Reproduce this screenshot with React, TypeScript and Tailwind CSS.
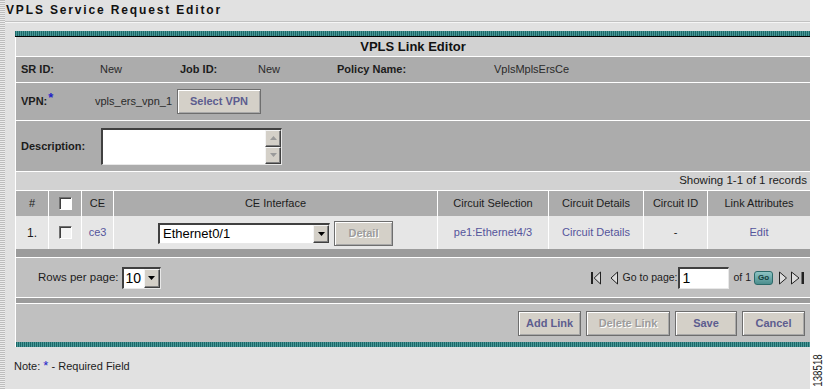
import React from 'react';

const link = 'text-[#55559c]';

const Checkbox: React.FC<{ light?: boolean }> = ({ light }) => (
    <span
        className={`block w-[13px] h-[13px] border-t border-l border-t-[#707070] border-l-[#707070] border-r border-b border-r-[#ffffff] border-b-[#ffffff] shadow-[inset_1px_1px_0_#404040] ${light ? 'bg-[#f4f4f4]' : 'bg-white'}`}
    />
);

const ArrowBtn: React.FC<{ dir: 'up' | 'down'; color?: string; h: string }> = ({ dir, color = '#000', h }) => (
    <span className={`flex items-center justify-center w-[16px] ${h} bg-[#d4d0c8] border border-t-[#f4f4f4] border-l-[#f4f4f4] border-r-[#404040] border-b-[#404040] shadow-[inset_-1px_-1px_0_#808080]`}>
        <svg width="7" height="4" viewBox="0 0 7 4">
            {dir === 'down' ? <path d="M0 0h7L3.5 4z" fill={color} /> : <path d="M0 4h7L3.5 0z" fill={color} />}
        </svg>
    </span>
);

const Btn: React.FC<{ children: React.ReactNode; w: string; disabled?: boolean }> = ({ children, w, disabled }) => (
    <button
        className={`h-[25px] ${w} flex items-center justify-center bg-[#d4d0c8] border border-[#6e6e6e] shadow-[inset_1px_1px_0_#ffffff,inset_-1px_-1px_0_#a8a8a8] text-[11px] font-bold ${disabled ? 'text-[#9c9c9c] [text-shadow:1px_1px_0_#ffffff]' : 'text-[#5d5d8f]'}`}
    >
        {children}
    </button>
);

// pager arrows: first / prev / next / last
const First = () => (
    <svg width="10" height="14" viewBox="0 0 10 14">
        <rect x="0" y="1" width="2" height="12" fill="#222" />
        <path d="M9.5 1v12L3.2 7z" fill="#dcdcdc" stroke="#222" strokeWidth="1" />
    </svg>
);
const Prev = () => (
    <svg width="8" height="14" viewBox="0 0 8 14">
        <path d="M7.5 1v12L1 7z" fill="#dcdcdc" stroke="#222" strokeWidth="1" />
    </svg>
);
const Next = () => (
    <svg width="9" height="14" viewBox="0 0 9 14">
        <path d="M0.5 1v12L7.5 7z" fill="#dcdcdc" stroke="#222" strokeWidth="1" />
    </svg>
);
const Last = () => (
    <svg width="14" height="14" viewBox="0 0 14 14">
        <path d="M0.5 1v12L8 7z" fill="#dcdcdc" stroke="#222" strokeWidth="1" />
        <rect x="10.5" y="1" width="2.5" height="12" fill="#222" />
    </svg>
);

export default function App() {
    return (
        <div className="w-[824px] h-[389px] flex bg-white font-['Liberation_Sans',Arial,sans-serif] text-[#1c1c1c] overflow-hidden">
            <div className="w-[810px] h-full flex bg-[#e1e1e1]">
                {/* dotted left edge */}
                <div className="w-[5px] h-full bg-[repeating-linear-gradient(0deg,#bdbdbd_0px,#bdbdbd_1px,#ececec_1px,#ececec_2px)]" />
                <div className="flex-1 flex flex-col">
                    <div className="h-[21px] flex items-center pl-[1px] pb-[1px] text-[12px] font-bold tracking-[1.85px] text-[#111]">
                        VPLS Service Request Editor
                    </div>
                    <div className="h-[2px] border-t border-t-[#c2c2c2] border-b border-b-[#f6f6f6]" />

                    {/* panel */}
                    <div className="mt-[8px] ml-[10px] w-[795px] flex flex-col">
                        <div className="h-[5px] bg-[repeating-linear-gradient(90deg,#1c6868_0px,#1c6868_1px,#4a9898_1px,#4a9898_2px)]" />
                        <div className="h-[1px] bg-black" />
                        <div className="flex flex-col border-l border-white">
                            <div className="h-[20px] flex items-center justify-center bg-[#d2d2d2] border-b border-white text-[13px] font-bold text-[#111]">
                                VPLS Link Editor
                            </div>

                            <div className="h-[26px] flex items-center pl-[5px] bg-[#acacac] border-b border-white text-[11px]">
                                <span className="w-[79px] font-bold">SR ID:</span>
                                <span className="w-[80px] text-[#2a2a2a]">New</span>
                                <span className="w-[78px] font-bold">Job ID:</span>
                                <span className="w-[79px] text-[#2a2a2a]">New</span>
                                <span className="w-[157px] font-bold">Policy Name:</span>
                                <span className="text-[#2a2a2a]">VplsMplsErsCe</span>
                            </div>

                            <div className="h-[38px] flex items-center pl-[5px] bg-[#acacac] border-b border-white text-[11px]">
                                <span className="w-[74px] font-bold flex items-start">
                                    VPN:<span className="text-[#2323c8] text-[13px] leading-[8px] mt-[1px] ml-[1px]">*</span>
                                </span>
                                <span className="w-[82px] text-[#2a2a2a]">vpls_ers_vpn_1</span>
                                <Btn w="w-[84px]">Select VPN</Btn>
                            </div>

                            <div className="h-[51px] flex items-center pl-[5px] bg-[#acacac] border-b border-white text-[11px]">
                                <span className="w-[80px] font-bold">Description:</span>
                                <div className="flex h-[37px] w-[181px] border-t-2 border-l-2 border-t-[#404040] border-l-[#404040] border-r border-b border-r-[#e8e8e8] border-b-[#e8e8e8] bg-white">
                                    <div className="flex-1" />
                                    <div className="flex flex-col">
                                        <ArrowBtn dir="up" color="#9a9a9a" h="h-[17px]" />
                                        <ArrowBtn dir="down" color="#9a9a9a" h="h-[17px]" />
                                    </div>
                                </div>
                            </div>

                            <div className="h-[19px] flex items-center justify-end pr-[3px] bg-[#d2d2d2] border-b border-white text-[11.5px] text-[#1c1c1c]">
                                Showing 1-1 of 1 records
                            </div>

                            {/* table header */}
                            <div className="h-[25px] flex bg-[#acacac] text-[11px] text-[#1c1c1c]">
                                <div className="w-[33px] border-r border-white flex items-center justify-center">#</div>
                                <div className="w-[33px] border-r border-white flex items-center justify-center">
                                    <Checkbox />
                                </div>
                                <div className="w-[32px] border-r border-white flex items-center justify-center">CE</div>
                                <div className="w-[324px] border-r border-white flex items-center justify-center">CE Interface</div>
                                <div className="w-[111px] border-r border-white flex items-center justify-center">Circuit Selection</div>
                                <div className="w-[95px] border-r border-white flex items-center justify-center">Circuit Details</div>
                                <div className="w-[64px] border-r border-white flex items-center justify-center">Circuit ID</div>
                                <div className="flex-1 flex items-center justify-center">Link Attributes</div>
                            </div>

                            {/* row 1 */}
                            <div className="h-[33px] flex bg-[#e6e6e6] text-[11px]">
                                <div className="w-[33px] border-r border-white flex items-center justify-center text-[12px]">1.</div>
                                <div className="w-[33px] border-r border-white flex items-center justify-center">
                                    <Checkbox light />
                                </div>
                                <div className={`w-[32px] border-r border-white flex items-center justify-center ${link}`}>ce3</div>
                                <div className="w-[324px] border-r border-white flex items-center justify-center gap-[4px] pt-[2px]">
                                    <div className="w-[172px] h-[21px] flex items-center bg-white border-t-2 border-l-2 border-t-[#404040] border-l-[#404040] border-r border-b border-r-[#e8e8e8] border-b-[#e8e8e8]">
                                        <span className="flex-1 pl-[3px] text-[13px] text-black">Ethernet0/1</span>
                                        <ArrowBtn dir="down" h="h-[18px]" />
                                    </div>
                                    <Btn w="w-[59px]" disabled>Detail</Btn>
                                </div>
                                <div className={`w-[111px] border-r border-white flex items-center justify-center ${link}`}>pe1:Ethernet4/3</div>
                                <div className={`w-[95px] border-r border-white flex items-center justify-center ${link}`}>Circuit Details</div>
                                <div className="w-[64px] border-r border-white flex items-center justify-center">-</div>
                                <div className={`flex-1 flex items-center justify-center ${link}`}>Edit</div>
                            </div>

                            <div className="h-[9px] bg-[#9c9c9c] border-b border-white" />

                            {/* pagination */}
                            <div className="h-[40px] flex items-center justify-between pl-[22px] pr-[5px] bg-[#c0c0c0] border-b border-white text-[11px]">
                                <div className="flex items-center gap-[3px]">
                                    <span className="text-[11.5px]">Rows per page:</span>
                                    <div className="w-[39px] h-[22px] flex items-center bg-white border-t-2 border-l-2 border-t-[#404040] border-l-[#404040] border-r border-b border-r-[#e8e8e8] border-b-[#e8e8e8]">
                                        <span className="flex-1 pl-[2px] text-[14px] text-black leading-none">10</span>
                                        <ArrowBtn dir="down" h="h-[19px]" />
                                    </div>
                                </div>
                                <div className="flex items-center text-[10.5px]">
                                    <First />
                                    <span className="ml-[9px] flex"><Prev /></span>
                                    <span className="ml-[5px]">Go to page:</span>
                                    <div className="ml-[1px] w-[51px] h-[22px] flex items-center pl-[2px] bg-white border-t-2 border-l-2 border-t-[#404040] border-l-[#404040] border-r border-b border-r-[#e8e8e8] border-b-[#e8e8e8] text-[14px] text-black">
                                        1
                                    </div>
                                    <span className="ml-[4px]">of 1</span>
                                    <span className="ml-[3px] w-[19px] h-[14px] flex items-center justify-center rounded-[3px] border border-[#2c6a6a] bg-[linear-gradient(#8ec4c4,#4b8e8e)] text-[8px] font-bold text-[#123c3c]">
                                        Go
                                    </span>
                                    <span className="ml-[6px] flex"><Next /></span>
                                    <span className="ml-[3px] flex"><Last /></span>
                                </div>
                            </div>

                            <div className="h-[6px] bg-[#9c9c9c] border-b border-white" />

                            {/* actions */}
                            <div className="h-[38px] flex items-center justify-end gap-[5px] pr-[5px] bg-[#c0c0c0]">
                                <Btn w="w-[63px]">Add Link</Btn>
                                <Btn w="w-[84px]" disabled>Delete Link</Btn>
                                <Btn w="w-[62px]">Save</Btn>
                                <Btn w="w-[63px]">Cancel</Btn>
                            </div>
                            <div className="h-[5px] bg-[repeating-linear-gradient(90deg,#1c6868_0px,#1c6868_1px,#4a9898_1px,#4a9898_2px)]" />
                        </div>
                    </div>

                    <div className="mt-[9px] ml-[9px] text-[11px] text-[#1c1c1c]">
                        Note: <span className="text-[#2323c8] text-[13px]">*</span> - Required Field
                    </div>
                </div>
            </div>
            <div className="relative w-[14px] h-full">
                <span className="absolute left-[-14px] top-[363px] text-[13px] leading-[15px] text-[#222] whitespace-nowrap -rotate-90 scale-x-[0.75]">
                    138518
                </span>
            </div>
        </div>
    );
}
